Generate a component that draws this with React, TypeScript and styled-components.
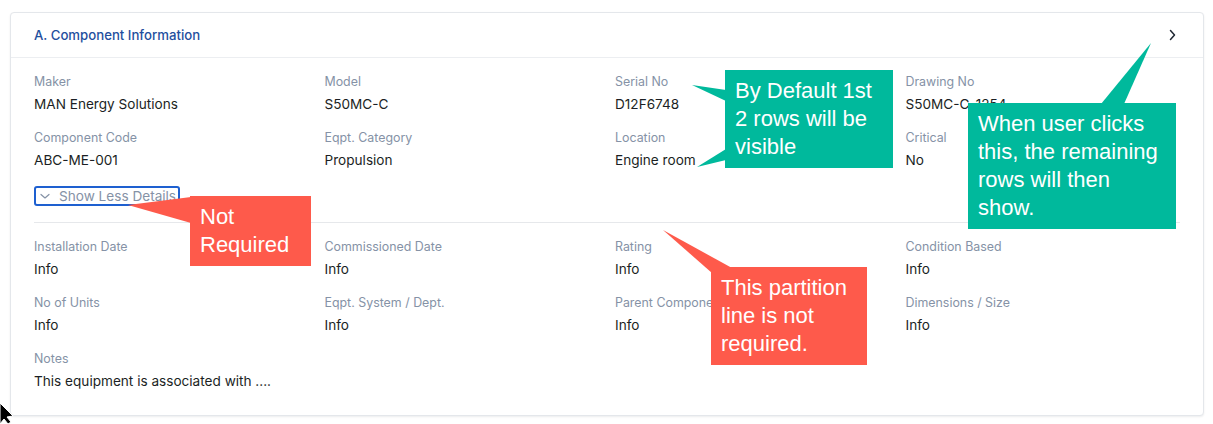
import React from "react";
import styled, { createGlobalStyle } from "styled-components";

const GlobalStyle = createGlobalStyle`
  html, body { margin: 0; padding: 0; background: #ffffff; }
  body { font-family: Inter, "Noto Sans", "Liberation Sans", sans-serif; }
  * { box-sizing: border-box; }
`;

const Page = styled.div`
  position: relative;
  width: 1213px;
  height: 424px;
  padding: 12px 9px 0 10px;
  overflow: hidden;
`;

const Card = styled.section`
  border: 1px solid #e4e7eb;
  border-radius: 4px;
  background: #fff;
  box-shadow: 0 1px 2px rgba(16, 24, 40, 0.08);
`;

const Header = styled.header`
  height: 45px;
  padding: 0 23px;
  display: flex;
  align-items: center;
  justify-content: space-between;
  border-bottom: 1px solid #eceef1;
`;

const Title = styled.h2`
  margin: 0;
  font-size: 13.2px;
  font-weight: 500;
  color: #1f4f9e;
`;

const Body = styled.div`
  padding: 15px 23px 24px;
`;

const Grid = styled.div`
  display: grid;
  grid-template-columns: repeat(4, 1fr);
  column-gap: 16px;
  row-gap: 15px;
`;

const Field = styled.div`
  display: flex;
  flex-direction: column;
  gap: 4px;
  min-width: 0;
`;

const Label = styled.span`
  font-size: 12.4px;
  line-height: 17px;
  color: #8592a6;
  white-space: nowrap;
`;

const Value = styled.span`
  font-size: 13.6px;
  line-height: 20px;
  color: #1b1f24;
  white-space: nowrap;
`;

const ToggleButton = styled.button`
  margin-top: 16px;
  height: 20px;
  display: inline-flex;
  align-items: center;
  gap: 7px;
  padding: 0 2px;
  border: 2px solid #1e60d0;
  border-radius: 3px;
  background: #fff;
  font-family: inherit;
  font-size: 13.6px;
  color: #8592a6;
  cursor: pointer;
`;

const Divider = styled.hr`
  margin: 15px 0 15px;
  border: 0;
  border-top: 1px solid #e6e8eb;
`;

const Note = styled.div<{ $bg: string; $left: number; $top: number; $width: number }>`
  position: absolute;
  left: ${(p) => p.$left}px;
  top: ${(p) => p.$top}px;
  width: ${(p) => p.$width}px;
  padding: 7px 8px 7px 10px;
  background: ${(p) => p.$bg};
  color: #fff;
  font-family: "Liberation Sans", Arial, sans-serif;
  font-size: 22px;
  line-height: 28px;
  white-space: nowrap;
`;

const Overlay = styled.svg`
  position: absolute;
  left: 0;
  top: 0;
  pointer-events: none;
`;

const GREEN = "#00b99c";
const RED = "#fe5a4b";

const rows1 = [
  ["Maker", "MAN Energy Solutions"],
  ["Model", "S50MC-C"],
  ["Serial No", "D12F6748"],
  ["Drawing No", "S50MC-C-1254"],
  ["Component Code", "ABC-ME-001"],
  ["Eqpt. Category", "Propulsion"],
  ["Location", "Engine room"],
  ["Critical", "No"],
];

const rows2 = [
  ["Installation Date", "Info"],
  ["Commissioned Date", "Info"],
  ["Rating", "Info"],
  ["Condition Based", "Info"],
  ["No of Units", "Info"],
  ["Eqpt. System / Dept.", "Info"],
  ["Parent Component", "Info"],
  ["Dimensions / Size", "Info"],
  ["Notes", "This equipment is associated with ...."],
];

const ChevronRight = () => (
  <svg width="16" height="16" viewBox="0 0 16 16" fill="none">
    <path d="M6.5 3.5 L10.5 8 L6.5 12.5" stroke="#1f2733" strokeWidth="1.5" strokeLinecap="round" strokeLinejoin="round" />
  </svg>
);

const ChevronDown = () => (
  <svg width="14" height="14" viewBox="0 0 14 14" fill="none">
    <path d="M3 5.5 L7 9 L11 5.5" stroke="#8592a6" strokeWidth="1.2" strokeLinecap="round" strokeLinejoin="round" />
  </svg>
);

export default function App() {
  return (
    <>
      <GlobalStyle />
      <Page>
        <Card>
          <Header>
            <Title>A. Component Information</Title>
            <ChevronRight />
          </Header>
          <Body>
            <Grid>
              {rows1.map(([l, v]) => (
                <Field key={l}>
                  <Label>{l}</Label>
                  <Value>{v}</Value>
                </Field>
              ))}
            </Grid>
            <ToggleButton>
              <ChevronDown />
              Show Less Details
            </ToggleButton>
            <Divider />
            <Grid>
              {rows2.map(([l, v]) => (
                <Field key={l}>
                  <Label>{l}</Label>
                  <Value>{v}</Value>
                </Field>
              ))}
            </Grid>
          </Body>
        </Card>

        <Overlay width="1213" height="424" viewBox="0 0 1213 424">
          <polygon points="692,85 726,90 726,101" fill={GREEN} />
          <polygon points="697,167 726,149 726,160" fill={GREEN} />
          <polygon points="1151,43 1101,104 1124,104" fill={GREEN} />
          <polygon points="128,205 191,197 191,223" fill={RED} />
          <polygon points="663,230 712,273 732,268" fill={RED} />
          <path d="M0 403 L0 424 L4 419 L8 424 L11 422 L7 417 L13 416 Z" fill="#000" stroke="#fff" strokeWidth="1" />
        </Overlay>

        <Note $bg={GREEN} $left={725} $top={70} $width={168}>
          By Default 1st
          <br />2 rows will be
          <br />visible
        </Note>
        <Note $bg={GREEN} $left={968} $top={103} $width={208}>
          When user clicks
          <br />this, the remaining
          <br />rows will then
          <br />show.
        </Note>
        <Note $bg={RED} $left={190} $top={196} $width={121}>
          Not
          <br />Required
        </Note>
        <Note $bg={RED} $left={711} $top={267} $width={156}>
          This partition
          <br />line is not
          <br />required.
        </Note>
      </Page>
    </>
  );
}
